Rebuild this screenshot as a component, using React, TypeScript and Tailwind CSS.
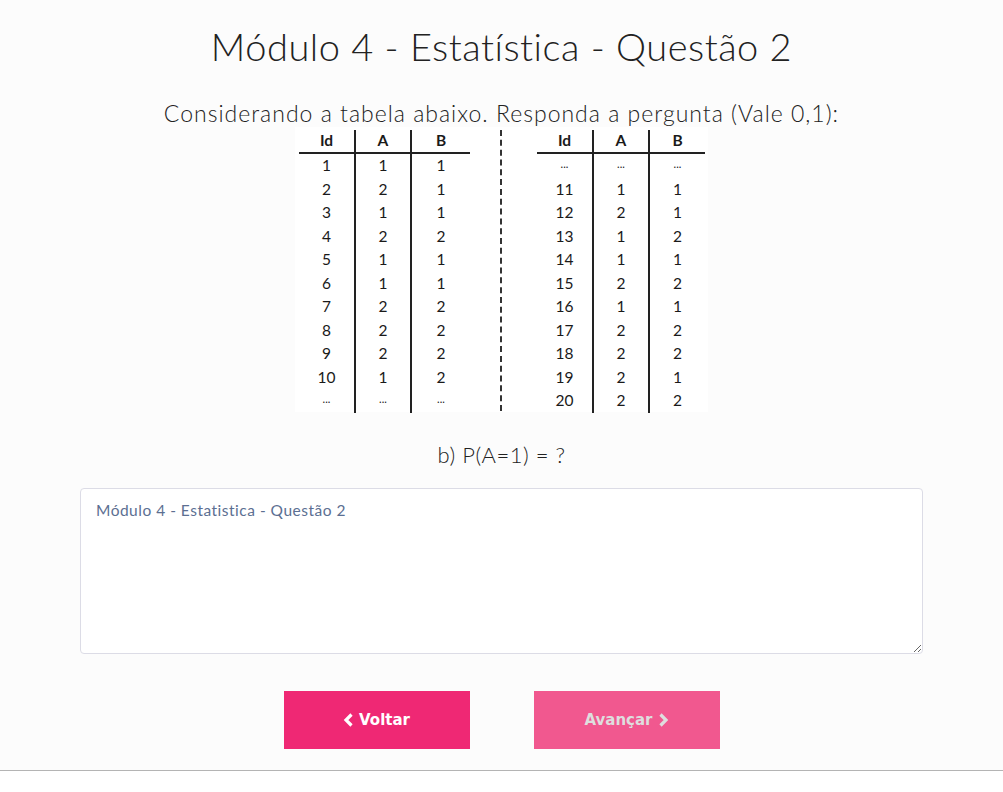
const left = [
  ["1", "1", "1"],
  ["2", "2", "1"],
  ["3", "1", "1"],
  ["4", "2", "2"],
  ["5", "1", "1"],
  ["6", "1", "1"],
  ["7", "2", "2"],
  ["8", "2", "2"],
  ["9", "2", "2"],
  ["10", "1", "2"],
  ["...", "...", "..."],
];

const right = [
  ["...", "...", "..."],
  ["11", "1", "1"],
  ["12", "2", "1"],
  ["13", "1", "2"],
  ["14", "1", "1"],
  ["15", "2", "2"],
  ["16", "1", "1"],
  ["17", "2", "2"],
  ["18", "2", "2"],
  ["19", "2", "1"],
  ["20", "2", "2"],
];

function DataTable({ rows, cols }: { rows: string[][]; cols: string }) {
  return (
    <div className={`grid ${cols} text-[15.5px] leading-none text-[#1a1a1a]`}>
      {["Id", "A", "B"].map((h, i) => (
        <div
          key={h}
          className={`flex h-[24px] items-center justify-center border-b-2 border-[#222] font-bold ${i < 2 ? "border-r-2" : ""}`}
        >
          {h}
        </div>
      ))}
      {rows.map((r, ri) =>
        r.map((c, ci) => (
          <div
            key={`${ri}-${ci}`}
            className={`flex h-[23.5px] items-center justify-center border-[#222] ${ci < 2 ? "border-r-2" : ""} ${c === "..." ? "pb-1 text-[11px]" : ""}`}
          >
            {c}
          </div>
        ))
      )}
    </div>
  );
}

function Chevron({ dir }: { dir: "left" | "right" }) {
  return (
    <svg width="11" height="14" viewBox="0 0 11 14" aria-hidden="true">
      <path
        d={dir === "left" ? "M8.5 1.5 L3 7 L8.5 12.5" : "M2.5 1.5 L8 7 L2.5 12.5"}
        fill="none"
        stroke="currentColor"
        strokeWidth="3.2"
      />
    </svg>
  );
}

export default function App() {
  return (
    <div className="min-h-[792px] bg-white font-['Lato',sans-serif]">
      <div className="flex flex-col items-center bg-[#fcfcfc] pb-[21px]">
        <h1 className="mt-[20px] text-[38px] font-light leading-[52px] tracking-[0.5px] text-[#222]">
          Módulo 4 - Estatística - Questão 2
        </h1>
        <p className="mt-[27px] text-[23px] font-light leading-[28px] tracking-[1px] text-[#222]">
          Considerando a tabela abaixo. Responda a pergunta (Vale 0,1):
        </p>

        <div className="flex h-[285px] w-[413px] bg-white pl-[4px] pt-[3px]">
          <DataTable rows={left} cols="grid-cols-[57px_56px_58px]" />
          <div className="ml-[30px] h-[281px] border-l-2 border-dashed border-[#333]" />
          <div className="ml-[35px]">
            <DataTable rows={right} cols="grid-cols-[57px_56px_55px]" />
          </div>
        </div>

        <p className="mt-[30px] text-[22px] font-light leading-[26px] tracking-[0.5px] text-[#222]">b) P(A=1) = ?</p>

        <textarea
          className="mt-[20px] h-[166px] w-[843px] resize-y rounded border border-[#dcdce6] bg-white px-[15px] py-[10px] text-[15.5px] tracking-[0.5px] text-[#333] placeholder:text-[#5c6f92] focus:outline-none"
          placeholder="Módulo 4 - Estatistica - Questão 2"
        />

        <div className="mt-[37px] flex gap-[64px] font-['DejaVu_Sans',sans-serif] text-[15px] font-bold">
          <button className="flex h-[58px] w-[186px] items-center justify-center gap-[5px] bg-[#ef2874] text-white">
            <Chevron dir="left" />
            Voltar
          </button>
          <button className="flex h-[58px] w-[186px] items-center justify-center gap-[5px] bg-[#f1588f] text-[#dedede]">
            Avançar
            <Chevron dir="right" />
          </button>
        </div>
      </div>
      <div className="border-t border-[#b4b4b4]" />
    </div>
  );
}
